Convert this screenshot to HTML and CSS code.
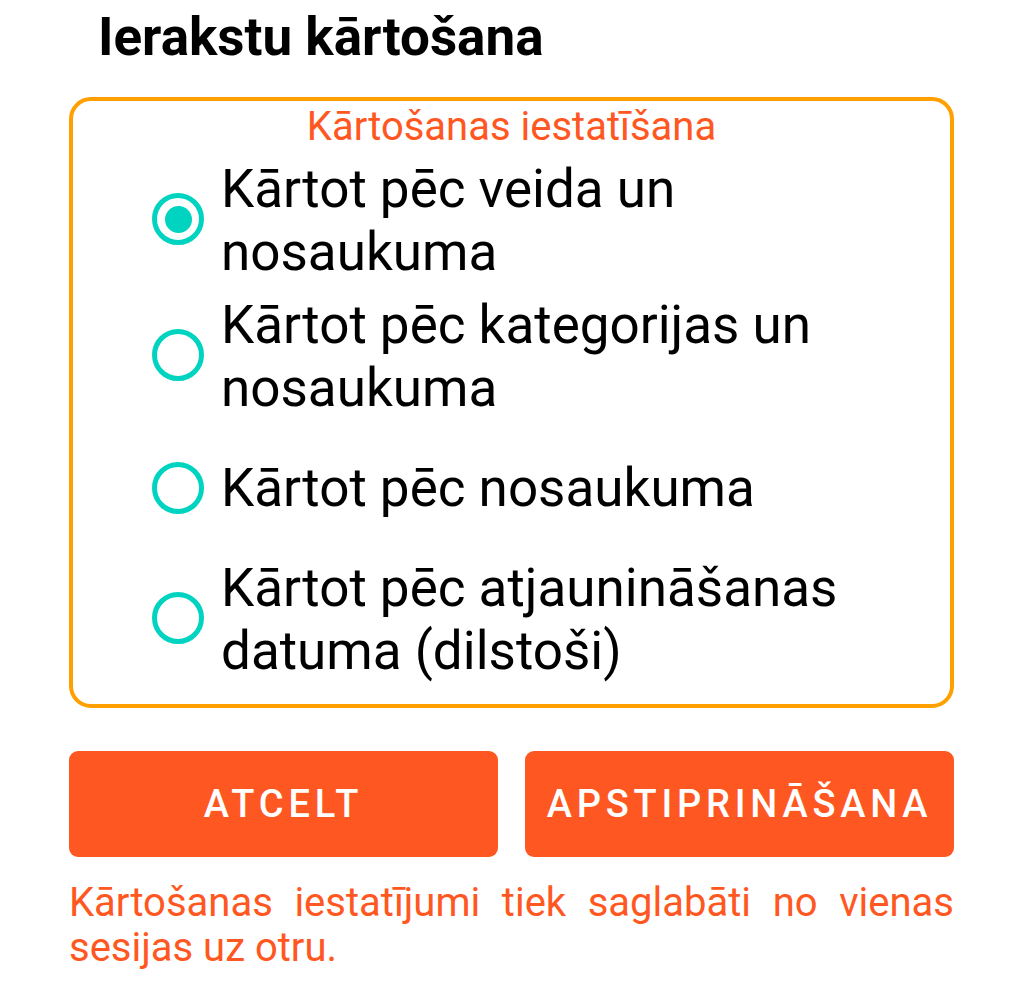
FILE: index.html
```html
<!DOCTYPE html>
<html lang="lv">
<head>
    <meta charset="UTF-8">
    <meta name="viewport" content="width=device-width, initial-scale=1.0">
    <title>Ierakstu kārtošana</title>
    <link rel="stylesheet" href="styles.css">
</head>
<body>
<div class="dialog">
    <h1>Ierakstu kārtošana</h1>

    <div class="sort-box">
        <div class="legend">Kārtošanas iestatīšana</div>

        <label class="option opt-1">
            <input type="radio" name="sort" checked>
            <span class="radio"></span>
            <span class="label">Kārtot pēc veida un nosaukuma</span>
        </label>
        <label class="option opt-2">
            <input type="radio" name="sort">
            <span class="radio"></span>
            <span class="label">Kārtot pēc kategorijas un nosaukuma</span>
        </label>
        <label class="option opt-3">
            <input type="radio" name="sort">
            <span class="radio"></span>
            <span class="label">Kārtot pēc nosaukuma</span>
        </label>
        <label class="option opt-4">
            <input type="radio" name="sort">
            <span class="radio"></span>
            <span class="label">Kārtot pēc atjaunināšanas datuma (dilstoši)</span>
        </label>
    </div>

    <div class="actions">
        <button class="btn">ATCELT</button>
        <button class="btn">APSTIPRINĀŠANA</button>
    </div>

    <p class="note">Kārtošanas iestatījumi tiek saglabāti no vienas sesijas uz otru.</p>
</div>
</body>
</html>
```

FILE: styles.css
```css
body {
    margin: 0;
    background: #ffffff;
    font-family: Roboto, "Noto Sans", Arial, sans-serif;
    color: #000000;
}

.dialog {
    padding: 0 70px 0 69px;
}

h1 {
    margin: 0;
    padding: 7px 0 0 29px;
    height: 97px;
    box-sizing: border-box;
    font-size: 53px;
    font-weight: 700;
    line-height: 60px;
}

/* bordered group with the radio list */
.sort-box {
    border: 4px solid #ffa000;
    border-radius: 22px;
    height: 611px;
    box-sizing: border-box;
    padding: 3px 40px 0 79px;
}

.legend {
    margin-left: -79px;
    margin-right: -40px;
    text-align: center;
    color: #ff5722;
    font-size: 40px;
    line-height: 46px;
}

.option {
    display: flex;
    align-items: center;
    gap: 17px;
    cursor: pointer;
}

.option input {
    display: none;
}

.radio {
    flex: none;
    width: 52px;
    height: 52px;
    margin-top: -4px;
    box-sizing: border-box;
    border: 5px solid #00d4c0;
    border-radius: 50%;
    display: flex;
    align-items: center;
    justify-content: center;
}

.option input:checked + .radio::after {
    content: "";
    width: 27px;
    height: 27px;
    border-radius: 50%;
    background: #00d4c0;
}

.label {
    font-size: 53px;
    line-height: 63px;
}

.opt-1 { margin-top: 8px; }
.opt-2 { margin-top: 10px; }
.opt-3 { margin-top: 5px; min-height: 126px; }
.opt-3 .radio { margin-top: 0; }
.opt-4 { margin-top: 6px; }

.actions {
    display: flex;
    gap: 27px;
    margin-top: 43px;
}

.btn {
    flex: 1;
    height: 106px;
    border: none;
    border-radius: 9px;
    background: #ff5722;
    color: #ffffff;
    font-family: Roboto, Arial, sans-serif;
    font-size: 38px;
    font-weight: 500;
    letter-spacing: 4.8px;
    cursor: pointer;
}

.note {
    margin: 23px 0 0;
    color: #ff5722;
    font-size: 40px;
    line-height: 45px;
    text-align: justify;
}
```
